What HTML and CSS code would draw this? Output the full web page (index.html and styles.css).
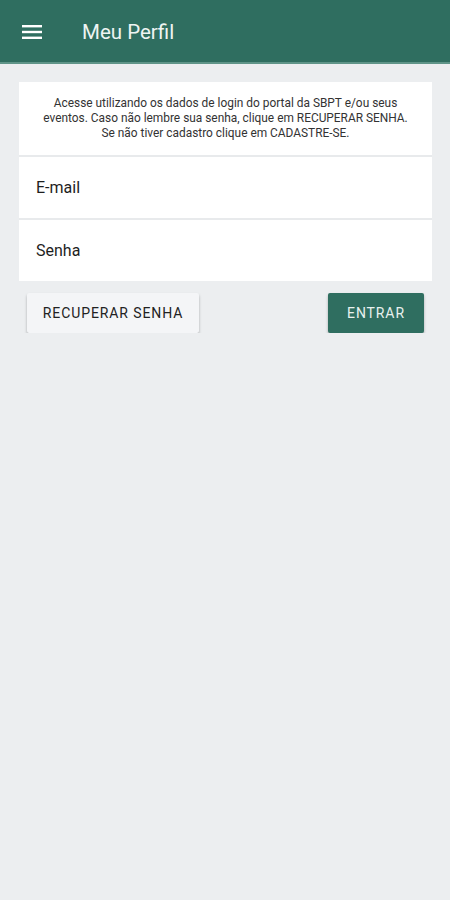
FILE: index.html
```html
<!DOCTYPE html>
<html lang="pt">
<head>
  <meta charset="UTF-8" />
  <meta name="viewport" content="width=device-width, initial-scale=1.0"/>
  <title>Meu Perfil</title>
  <link rel="stylesheet" href="styles.css">
</head>
<body>
  <header class="topbar">
    <button class="menu-btn" aria-label="Menu">
      <svg width="20" height="14" viewBox="0 0 20 14">
        <rect x="0" y="0" width="20" height="2.4" fill="#fff"/>
        <rect x="0" y="5.8" width="20" height="2.4" fill="#fff"/>
        <rect x="0" y="11.6" width="20" height="2.4" fill="#fff"/>
      </svg>
    </button>
    <h1>Meu Perfil</h1>
  </header>

  <main>
    <div class="card">
      <p class="info">Acesse utilizando os dados de login do portal da SBPT e/ou seus<br>eventos. Caso não lembre sua senha, clique em RECUPERAR SENHA.<br>Se não tiver cadastro clique em CADASTRE-SE.</p>
      <div class="field">E-mail</div>
      <div class="field">Senha</div>
    </div>

    <div class="actions">
      <button class="btn btn-light">RECUPERAR SENHA</button>
      <button class="btn btn-primary">ENTRAR</button>
    </div>
  </main>
</body>
</html>
```

FILE: styles.css
```css
body {
  margin: 0;
  font-family: Roboto, "Noto Sans", sans-serif;
  background: #eceef0;
  color: #222;
}
.topbar {
  background: #2f6e60;
  border-bottom: 2px solid #5f9488;
  display: flex;
  align-items: center;
  padding: 2px 22px 0;
  box-sizing: border-box;
  height: 64px;
  gap: 40px;
}
.menu-btn {
  background: none;
  border: none;
  padding: 0;
  display: flex;
  cursor: pointer;
}
.topbar h1 {
  margin: 0;
  color: #eef4f2;
  font-size: 20.5px;
  font-weight: 400;
}
main { padding: 18px 18px 0 19px; }
.card {
  display: flex;
  flex-direction: column;
  gap: 2px;
  background: #e8eaec;
}
.info {
  margin: 0;
  background: #fff;
  text-align: center;
  font-size: 11.9px;
  line-height: 15px;
  color: #333;
  padding: 14px 8px 14px;
}
.field {
  background: #fff;
  height: 61px;
  display: flex;
  align-items: center;
  padding-left: 17px;
  font-size: 16px;
  color: #1e1e1e;
}
.actions {
  display: flex;
  justify-content: space-between;
  padding: 12px 8px 0 8px;
}
.btn {
  font-family: Roboto, sans-serif;
  font-size: 14px;
  letter-spacing: 0.9px;
  border: none;
  border-radius: 2px;
  height: 40px;
  cursor: pointer;
  box-shadow: 0 2px 3px rgba(0,0,0,0.28);
}
.btn-light {
  background: #f4f5f7;
  color: #222;
  width: 172px;
}
.btn-primary {
  background: #2f6e60;
  color: #e8f1ee;
  width: 96px;
}
```
